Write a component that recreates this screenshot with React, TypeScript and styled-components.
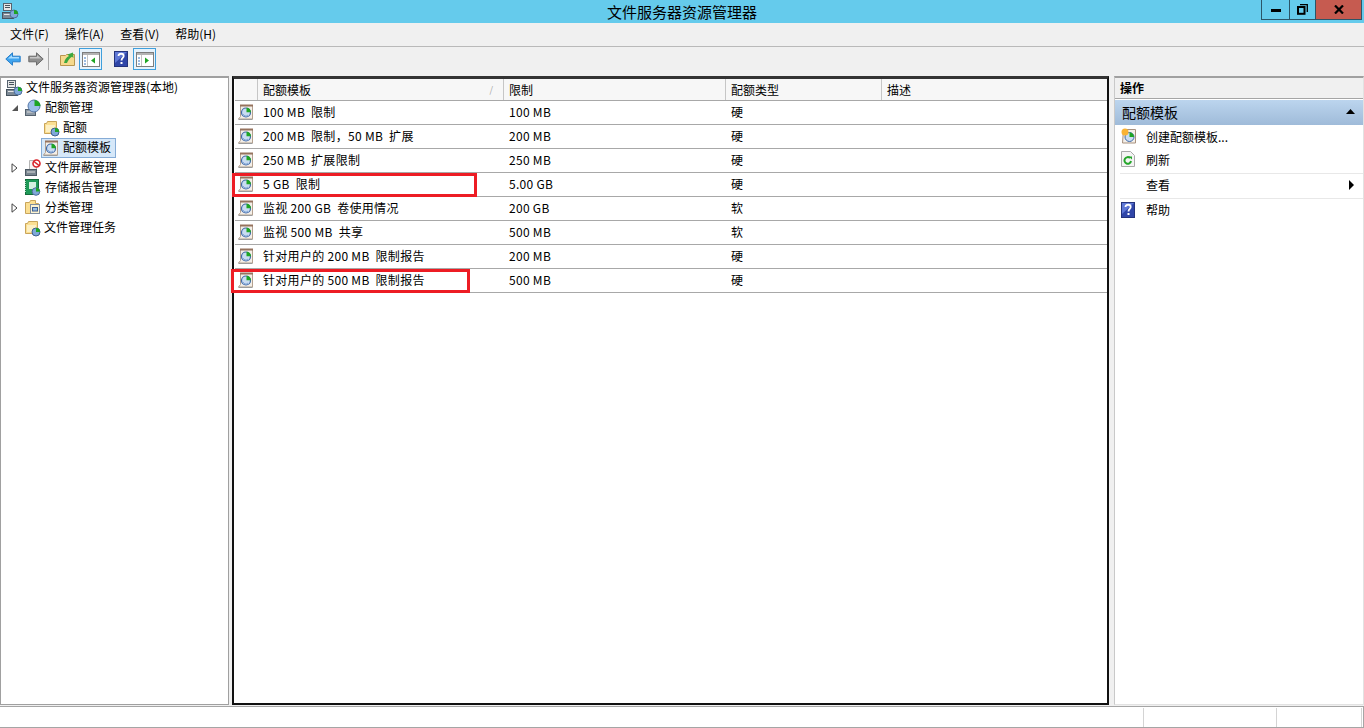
import React from "react";
import styled, { createGlobalStyle } from "styled-components";

const GlobalStyle = createGlobalStyle`
  html, body {
    margin: 0;
    padding: 0;
    background: #f0f0f0;
    overflow: hidden;
  }
  body {
    font-family: "Noto Sans CJK SC", "Noto Sans", sans-serif;
    font-size: 12px;
    color: #000;
  }
`;

const Win = styled.div`
  width: 1364px;
  height: 728px;
  display: flex;
  flex-direction: column;
  background: #f0f0f0;
`;

const TitleBar = styled.header`
  height: 23px;
  flex: none;
  background: #65cbec;
  display: flex;
  align-items: flex-start;
  position: relative;
`;

const TitleIcon = styled.span`
  display: flex;
  margin: 2px 0 0 1px;
`;

const TitleText = styled.div`
  position: absolute;
  left: 0;
  right: 0;
  top: 2px;
  text-align: center;
  font-size: 15px;
  line-height: 19px;
`;

const WinButtons = styled.div`
  margin-left: auto;
  margin-right: 2px;
  display: flex;
  height: 20px;
  border: 1px solid #2b5568;
  border-top: none;
  box-sizing: border-box;
  position: relative;
`;

const WinButton = styled.div<{ $w: number; $close?: boolean }>`
  width: ${(p) => p.$w}px;
  background: ${(p) => (p.$close ? "#c65b50" : "#65cbec")};
  display: flex;
  align-items: center;
  justify-content: center;
  & + & {
    border-left: 1px solid #2b5568;
  }
`;

const MenuBar = styled.nav`
  height: 23px;
  flex: none;
  display: flex;
  align-items: center;
  padding-left: 10px;
  gap: 16px;
  border-bottom: 1px solid #b9b9b9;
`;

const MenuItem = styled.span`
  line-height: 21px;
  padding-bottom: 2px;
  font-size: 12px;
`;

const ToolBar = styled.div`
  height: 28px;
  flex: none;
  display: flex;
  align-items: center;
  padding: 0 0 4px 5px;
  box-sizing: border-box;
`;

const ToolIcon = styled.span<{ $ml?: number }>`
  display: flex;
  margin-left: ${(p) => p.$ml ?? 0}px;
`;

const ToolSep = styled.span`
  width: 1px;
  height: 22px;
  background: #a9a9a9;
  margin-left: 4px;
`;

const PaneButton = styled.span<{ $ml: number }>`
  width: 23px;
  height: 22px;
  box-sizing: border-box;
  margin-left: ${(p) => p.$ml}px;
  border: 1px solid #3f9fdc;
  background: #e6f2fb;
  display: flex;
  align-items: center;
  justify-content: center;
`;

const Panes = styled.div`
  flex: 1;
  min-height: 0;
  display: flex;
  padding-top: 1px;
`;

const TreePane = styled.aside`
  width: 229px;
  flex: none;
  box-sizing: border-box;
  background: #fff;
  border: 1px solid #a0a0a0;
  border-top: 2px solid #a0a0a0;
`;

const TreeRow = styled.div<{ $indent: number }>`
  height: 20px;
  display: flex;
  align-items: center;
  padding-left: ${(p) => p.$indent}px;
`;

const Arrow = styled.span`
  width: 10px;
  height: 12px;
  margin-right: 3px;
  display: flex;
  align-items: center;
  flex: none;
`;

const TreeLabel = styled.span<{ $selected?: boolean }>`
  display: flex;
  align-items: center;
  gap: ${(p) => (p.$selected ? 4 : 3)}px;
  line-height: 18px;
  height: ${(p) => (p.$selected ? "18px" : "auto")};
  white-space: nowrap;
  ${(p) =>
    p.$selected
      ? `background:#d6e8f9; border:1px solid #86acd6; margin-left:-2px; padding:0 4px 0 1px;`
      : ""}
`;

const TreeText = styled.span`
  padding-bottom: 2px;
`;

const ListPane = styled.main`
  width: 877px;
  flex: none;
  margin-left: 3px;
  box-sizing: border-box;
  background: #fff;
  border: 2px solid #111;
  border-top: 3px solid #333;
  padding-left: 1px;
`;

const HeaderRow = styled.div`
  height: 21px;
  display: flex;
  background: #f7f7f7;
  border-bottom: 1px solid #a8a8a8;
`;

const HeaderCell = styled.div<{ $w: number }>`
  width: ${(p) => p.$w}px;
  flex: none;
  box-sizing: border-box;
  padding-left: 5px;
  line-height: 21px;
  border-right: 1px solid #c6c6c6;
  position: relative;
  &:last-child {
    border-right: none;
  }
`;

const SortMark = styled.span`
  position: absolute;
  right: 10px;
  top: 0;
  color: #a5a5a5;
  font-size: 9px;
`;

const Row = styled.div<{ $markLeft?: number; $markWidth?: number }>`
  height: 24px;
  box-sizing: border-box;
  display: flex;
  align-items: center;
  border-bottom: 1px solid #a8a8a8;
  position: relative;
  ${(p) =>
    p.$markWidth
      ? `&::after {
          content: "";
          position: absolute;
          left: ${p.$markLeft}px;
          top: 0;
          width: ${p.$markWidth}px;
          height: 24px;
          box-sizing: border-box;
          border: 3px solid #ed1c24;
        }`
      : ""}
`;

const IconCell = styled.div`
  width: 23px;
  flex: none;
  display: flex;
  padding-left: 3px;
  box-sizing: border-box;
`;

const Cell = styled.div<{ $w: number }>`
  width: ${(p) => p.$w}px;
  flex: none;
  box-sizing: border-box;
  padding: 0 0 2px 5px;
  white-space: pre;
  line-height: 21px;
  letter-spacing: 0.3px;
`;

const ActionPane = styled.aside`
  width: 250px;
  flex: none;
  margin-left: 5px;
  box-sizing: border-box;
  background: #fff;
  border-top: 2px solid #a0a0a0;
  border-left: 1px solid #c9c9c9;
  border-right: 1px solid #e2e2e2;
  border-bottom: 1px solid #e2e2e2;
`;

const ActionTitle = styled.div`
  height: 20px;
  background: #f0f0f0;
  border-bottom: 1px solid #a5a5a5;
  padding-left: 5px;
  line-height: 19px;
  font-weight: 700;
`;

const SectionBar = styled.div`
  height: 25px;
  margin-top: 1px;
  background: linear-gradient(#bcd5ee, #9fbbd9);
  display: flex;
  align-items: center;
  justify-content: space-between;
  padding: 0 8px 2px 7px;
  box-sizing: border-box;
  font-size: 14px;
`;

const ActionRow = styled.div<{ $sep?: boolean; $h: number }>`
  height: ${(p) => p.$h}px;
  display: flex;
  align-items: center;
  margin-left: 5px;
  padding: 0 0 ${(p) => (p.$sep ? 4 : 2)}px 1px;
  box-sizing: border-box;
  position: relative;
  ${(p) => (p.$sep ? "border-bottom: 1px solid #e8e8e8;" : "")}
`;

const ActionIcon = styled.span`
  width: 25px;
  flex: none;
  display: flex;
`;

const ActionArrow = styled.span`
  position: absolute;
  right: 9px;
  top: 6px;
  width: 0;
  height: 0;
  border-left: 5px solid #000;
  border-top: 5px solid transparent;
  border-bottom: 5px solid transparent;
`;

const StatusBar = styled.footer`
  height: 22px;
  flex: none;
  box-sizing: border-box;
  background: #fff;
  margin-top: 1px;
  border-top: 1px solid #a5a5a5;
  border-bottom: 1px solid #a5a5a5;
  border-right: 1px solid #a5a5a5;
  display: flex;
  justify-content: flex-end;
`;

const StatusCell = styled.div<{ $w: number }>`
  width: ${(p) => p.$w}px;
  box-sizing: border-box;
  margin-top: 1px;
  border-left: 1px solid #d4d4d4;
`;

/* ---- icons ---- */

const PieIcon = () => (
  <svg width="16" height="17" viewBox="0 0 16 17">
    <path d="M2.500 1.500h12v13.500h-14l2-2.500z" fill="#f4efe8" stroke="#b3a08f" />
    <path d="M2 1.500h13" stroke="#96735e" strokeWidth="2" />
    <path d="M.5 15.500h14" stroke="#9c9c9c" />
    <circle cx="8" cy="8.500" r="4.500" fill="#c9dcf2" stroke="#3f69a8" strokeWidth="1.200" />
    <path d="M8.500 3.800a4.500 4.500 0 0 1 4.500 4.500H8.500z" fill="#1ea524" />
    <path d="M5 10a3 3 0 0 0 5 1" fill="none" stroke="#7fa4d6" />
  </svg>
);

const ServerIcon = () => (
  <svg width="18" height="18" viewBox="0 0 18 18">
    <rect x="2.500" y="1.500" width="8" height="7" fill="#e6e6e6" stroke="#56636f" />
    <path d="M4 3.500h5M4 5.500h5" stroke="#47545f" />
    <rect x="1.500" y="10.500" width="11" height="6" fill="#7d8a96" stroke="#47545f" />
    <path d="M3 12.500h8" stroke="#e6e6e6" />
    <circle cx="13" cy="12" r="4" fill="#7fa8d8" stroke="#4f6f9d" />
    <path d="M13 8a4 4 0 0 1 4 4h-4z" fill="#1ea524" />
  </svg>
);

const QuotaMgrIcon = () => (
  <svg width="18" height="18" viewBox="0 0 18 18">
    <rect x="1.500" y="10.500" width="10" height="6" fill="#8d99a5" stroke="#55626e" />
    <path d="M3 13h7" stroke="#ddd" />
    <circle cx="10" cy="7" r="6" fill="#9dbfe8" stroke="#5577a8" />
    <path d="M10.500 1a6 6 0 0 1 6 6h-6z" fill="#1ea524" />
  </svg>
);

const FolderPieIcon = () => (
  <svg width="17" height="17" viewBox="0 0 17 17">
    <path d="M1.500 3.500h2l1-2h9v12h-12z" fill="#fbdf92" stroke="#c9a55a" />
    <rect x="3" y="5" width="9" height="7" fill="#fdf0c4" />
    <circle cx="12" cy="12" r="4" fill="#7fa8d8" stroke="#3f5f8f" />
    <path d="M12 8a4 4 0 0 1 4 4h-4z" fill="#1ea524" />
  </svg>
);

const BlockIcon = () => (
  <svg width="18" height="18" viewBox="0 0 18 18">
    <path d="M5.500 1.500h7v9h-7z" fill="#f2f2f2" stroke="#b5b5b5" />
    <rect x="1.500" y="10.500" width="11" height="6" fill="#79858f" stroke="#4d5963" />
    <path d="M3 13h8" stroke="#ddd" />
    <circle cx="12.500" cy="4.500" r="3.500" fill="#fff" stroke="#d8232a" strokeWidth="1.600" />
    <path d="M10 2.500l5 4" stroke="#d8232a" strokeWidth="1.600" />
  </svg>
);

const ReportIcon = () => (
  <svg width="18" height="18" viewBox="0 0 18 18">
    <rect x="1.500" y="0.500" width="13" height="15" fill="#1f9a58" stroke="#146c3c" />
    <path d="M1.500 2v12" stroke="#a7e0bf" strokeDasharray="1 1" />
    <rect x="5" y="3" width="7" height="7" fill="#d5f0df" />
    <circle cx="12" cy="12.500" r="3.800" fill="#7fa8d8" stroke="#4f6f9d" />
    <path d="M12 8.700a3.800 3.800 0 0 1 3.800 3.800H12z" fill="#1ea524" />
  </svg>
);

const ClassifyIcon = () => (
  <svg width="18" height="18" viewBox="0 0 18 18">
    <path d="M1.500 3.500h4l1-2h5v3h3v10h-13z" fill="#fbdf92" stroke="#c9a55a" />
    <rect x="6.500" y="5.500" width="9" height="9" fill="#fdf3d0" stroke="#7d8da0" />
    <rect x="8.500" y="8.500" width="5" height="3.500" fill="#9cc0e6" stroke="#3f5f8f" />
  </svg>
);

const BackIcon = () => (
  <svg width="16" height="14" viewBox="0 0 16 14">
    <path d="M7.500 .8L.8 7l6.700 6.200V9.800h7.700V4.200H7.500z" fill="#3fa4ef" stroke="#2a7fc9" />
    <path d="M7 3v2h7v1.500H3z" fill="#a9dcff" />
  </svg>
);

const ForwardIcon = () => (
  <svg width="16" height="14" viewBox="0 0 16 14">
    <path d="M8.500 .8L15.200 7l-6.700 6.200V9.800H.8V4.200h7.700z" fill="#8f8f8f" stroke="#6b6b6b" />
    <path d="M9 3v2H2v1.500h11z" fill="#c6c6c6" />
  </svg>
);

const UpFolderIcon = () => (
  <svg width="15" height="16" viewBox="0 0 15 16">
    <path d="M.5 4.500h5l1-1h8v11H.5z" fill="#f6d98c" stroke="#b8964f" />
    <path d="M4 12c1-4 2.500-6 5-7L7.500 3.500 13 1.500l.5 5.500L12 5.800C10 7 8 9 7 12z" fill="#3ca83f" />
  </svg>
);

const PaneIcon = ({ right }: { right?: boolean }) => (
  <svg width="18" height="15" viewBox="0 0 18 15">
    <rect x=".5" y=".5" width="17" height="14" fill="#fff" stroke="#7d7d7d" />
    <rect x="1" y="1" width="16" height="2" fill="#b3b3b3" />
    <path d="M5.500 3v11" stroke="#c4c4c4" />
    <path d="M2 6h2M2 9h2M2 12h2" stroke="#3b78c4" />
    {right ? (
      <path d="M9 5.500l4 3-4 3z" fill="#1ea524" />
    ) : (
      <path d="M13 5.500l-4 3 4 3z" fill="#1ea524" />
    )}
  </svg>
);

const HelpIcon = () => (
  <svg width="14" height="16" viewBox="0 0 14 16">
    <rect x=".5" y=".5" width="13" height="15" fill="#3046a8" stroke="#24337c" />
    <path d="M1 1h12L1 12z" fill="#5f78d6" />
    <path
      d="M4.500 5c0-3 5.200-3 5.200 0 0 2-2.200 2-2.200 4.500"
      fill="none"
      stroke="#fff"
      strokeWidth="1.800"
    />
    <rect x="6.500" y="11" width="2" height="2" fill="#fff" />
  </svg>
);

const NewTemplateIcon = () => (
  <svg width="16" height="17" viewBox="0 0 16 17">
    <path d="M2.500 1.500h12v13.500h-13z" fill="#f4efe8" stroke="#a8917f" />
    <circle cx="8.500" cy="9" r="4.500" fill="#c9dcf2" stroke="#3f69a8" />
    <path d="M8.500 4.500a4.500 4.500 0 0 1 4.500 4.500H8.500z" fill="#1ea524" />
    <circle cx="4" cy="4" r="3.500" fill="#f9b233" />
  </svg>
);

const RefreshIcon = () => (
  <svg width="14" height="16" viewBox="0 0 14 16">
    <path d="M.5 .5h9l4 4v11H.5z" fill="#f4f4f4" stroke="#a8a8a8" />
    <path d="M10 10a3.300 3.300 0 1 1-1-3" fill="none" stroke="#25a62a" strokeWidth="2" />
    <path d="M7.500 5.500h3.500v3z" fill="#25a62a" />
  </svg>
);

const OpenArrow = () => (
  <svg width="8" height="8" viewBox="0 0 8 8">
    <path d="M7 1v6H1z" fill="#555" />
  </svg>
);

const ClosedArrow = () => (
  <svg width="7" height="10" viewBox="0 0 7 10">
    <path d="M1 .8l5 4.200-5 4.200z" fill="#fff" stroke="#444" />
  </svg>
);

const WinMin = () => (
  <svg width="10" height="4" viewBox="0 0 10 4">
    <rect width="10" height="3" y="1" fill="#000" />
  </svg>
);

const WinRestore = () => (
  <svg width="11" height="11" viewBox="0 0 11 11">
    <path d="M3 .7h7.300V8" fill="none" stroke="#000" strokeWidth="1.300" />
    <rect x="1" y="3" width="6.500" height="6.800" fill="none" stroke="#000" strokeWidth="2" />
  </svg>
);

const WinClose = () => (
  <svg width="10" height="9" viewBox="0 0 10 9">
    <path d="M1 .5l8 8M9 .5l-8 8" stroke="#000" strokeWidth="2.200" />
  </svg>
);

/* ---- data ---- */

const columns = [
  { title: "", w: 23 },
  { title: "配额模板", w: 246 },
  { title: "限制", w: 222 },
  { title: "配额类型", w: 156 },
  { title: "描述", w: 225 },
];

const rows = [
  { name: "100 MB  限制", limit: "100 MB", type: "硬" },
  { name: "200 MB  限制，50 MB  扩展", limit: "200 MB", type: "硬" },
  { name: "250 MB  扩展限制", limit: "250 MB", type: "硬" },
  { name: "5 GB  限制", limit: "5.00 GB", type: "硬", markLeft: -3, markWidth: 245 },
  { name: "监视 200 GB  卷使用情况", limit: "200 GB", type: "软" },
  { name: "监视 500 MB  共享", limit: "500 MB", type: "软" },
  { name: "针对用户的 200 MB  限制报告", limit: "200 MB", type: "硬" },
  { name: "针对用户的 500 MB  限制报告", limit: "500 MB", type: "硬", markLeft: -4, markWidth: 239 },
];

const App: React.FC = () => {
  return (
    <Win>
      <GlobalStyle />
      <TitleBar>
        <TitleIcon>
          <ServerIcon />
        </TitleIcon>
        <TitleText>文件服务器资源管理器</TitleText>
        <WinButtons>
          <WinButton $w={27}>
            <WinMin />
          </WinButton>
          <WinButton $w={25}>
            <WinRestore />
          </WinButton>
          <WinButton $w={45} $close>
            <WinClose />
          </WinButton>
        </WinButtons>
      </TitleBar>

      <MenuBar>
        <MenuItem>文件(F)</MenuItem>
        <MenuItem>操作(A)</MenuItem>
        <MenuItem>查看(V)</MenuItem>
        <MenuItem>帮助(H)</MenuItem>
      </MenuBar>

      <ToolBar>
        <ToolIcon>
          <BackIcon />
        </ToolIcon>
        <ToolIcon $ml={7}>
          <ForwardIcon />
        </ToolIcon>
        <ToolSep />
        <ToolIcon $ml={11}>
          <UpFolderIcon />
        </ToolIcon>
        <PaneButton $ml={4}>
          <PaneIcon />
        </PaneButton>
        <ToolIcon $ml={12}>
          <HelpIcon />
        </ToolIcon>
        <PaneButton $ml={5}>
          <PaneIcon right />
        </PaneButton>
      </ToolBar>

      <Panes>
        <TreePane>
          <TreeRow $indent={4}>
            <TreeLabel>
              <ServerIcon />
              <TreeText>文件服务器资源管理器(本地)</TreeText>
            </TreeLabel>
          </TreeRow>
          <TreeRow $indent={10}>
            <Arrow>
              <OpenArrow />
            </Arrow>
            <TreeLabel>
              <QuotaMgrIcon />
              <TreeText>配额管理</TreeText>
            </TreeLabel>
          </TreeRow>
          <TreeRow $indent={42}>
            <TreeLabel>
              <FolderPieIcon />
              <TreeText>配额</TreeText>
            </TreeLabel>
          </TreeRow>
          <TreeRow $indent={42}>
            <TreeLabel $selected>
              <PieIcon />
              <TreeText>配额模板</TreeText>
            </TreeLabel>
          </TreeRow>
          <TreeRow $indent={10}>
            <Arrow>
              <ClosedArrow />
            </Arrow>
            <TreeLabel>
              <BlockIcon />
              <TreeText>文件屏蔽管理</TreeText>
            </TreeLabel>
          </TreeRow>
          <TreeRow $indent={23}>
            <TreeLabel>
              <ReportIcon />
              <TreeText>存储报告管理</TreeText>
            </TreeLabel>
          </TreeRow>
          <TreeRow $indent={10}>
            <Arrow>
              <ClosedArrow />
            </Arrow>
            <TreeLabel>
              <ClassifyIcon />
              <TreeText>分类管理</TreeText>
            </TreeLabel>
          </TreeRow>
          <TreeRow $indent={23}>
            <TreeLabel>
              <FolderPieIcon />
              <TreeText>文件管理任务</TreeText>
            </TreeLabel>
          </TreeRow>
        </TreePane>

        <ListPane>
          <HeaderRow>
            {columns.map((col, i) => (
              <HeaderCell key={i} $w={col.w}>
                {col.title}
                {i === 1 && <SortMark>/</SortMark>}
              </HeaderCell>
            ))}
          </HeaderRow>
          {rows.map((row) => (
            <Row key={row.name} $markLeft={row.markLeft} $markWidth={row.markWidth}>
              <IconCell>
                <PieIcon />
              </IconCell>
              <Cell $w={246}>{row.name}</Cell>
              <Cell $w={222}>{row.limit}</Cell>
              <Cell $w={156}>{row.type}</Cell>
            </Row>
          ))}
        </ListPane>

        <ActionPane>
          <ActionTitle>操作</ActionTitle>
          <SectionBar>
            配额模板
            <svg width="9" height="5" viewBox="0 0 9 5">
              <path d="M4.500 0L9 5H0z" fill="#000" />
            </svg>
          </SectionBar>
          <ActionRow $h={24}>
            <ActionIcon>
              <NewTemplateIcon />
            </ActionIcon>
            创建配额模板...
          </ActionRow>
          <ActionRow $h={25} $sep>
            <ActionIcon>
              <RefreshIcon />
            </ActionIcon>
            刷新
          </ActionRow>
          <ActionRow $h={25} $sep>
            <ActionIcon />
            查看
            <ActionArrow />
          </ActionRow>
          <ActionRow $h={23}>
            <ActionIcon>
              <HelpIcon />
            </ActionIcon>
            帮助
          </ActionRow>
        </ActionPane>
      </Panes>

      <StatusBar>
        <StatusCell $w={133} />
        <StatusCell $w={85} />
        <StatusCell $w={2} />
      </StatusBar>
    </Win>
  );
};

export default App;
